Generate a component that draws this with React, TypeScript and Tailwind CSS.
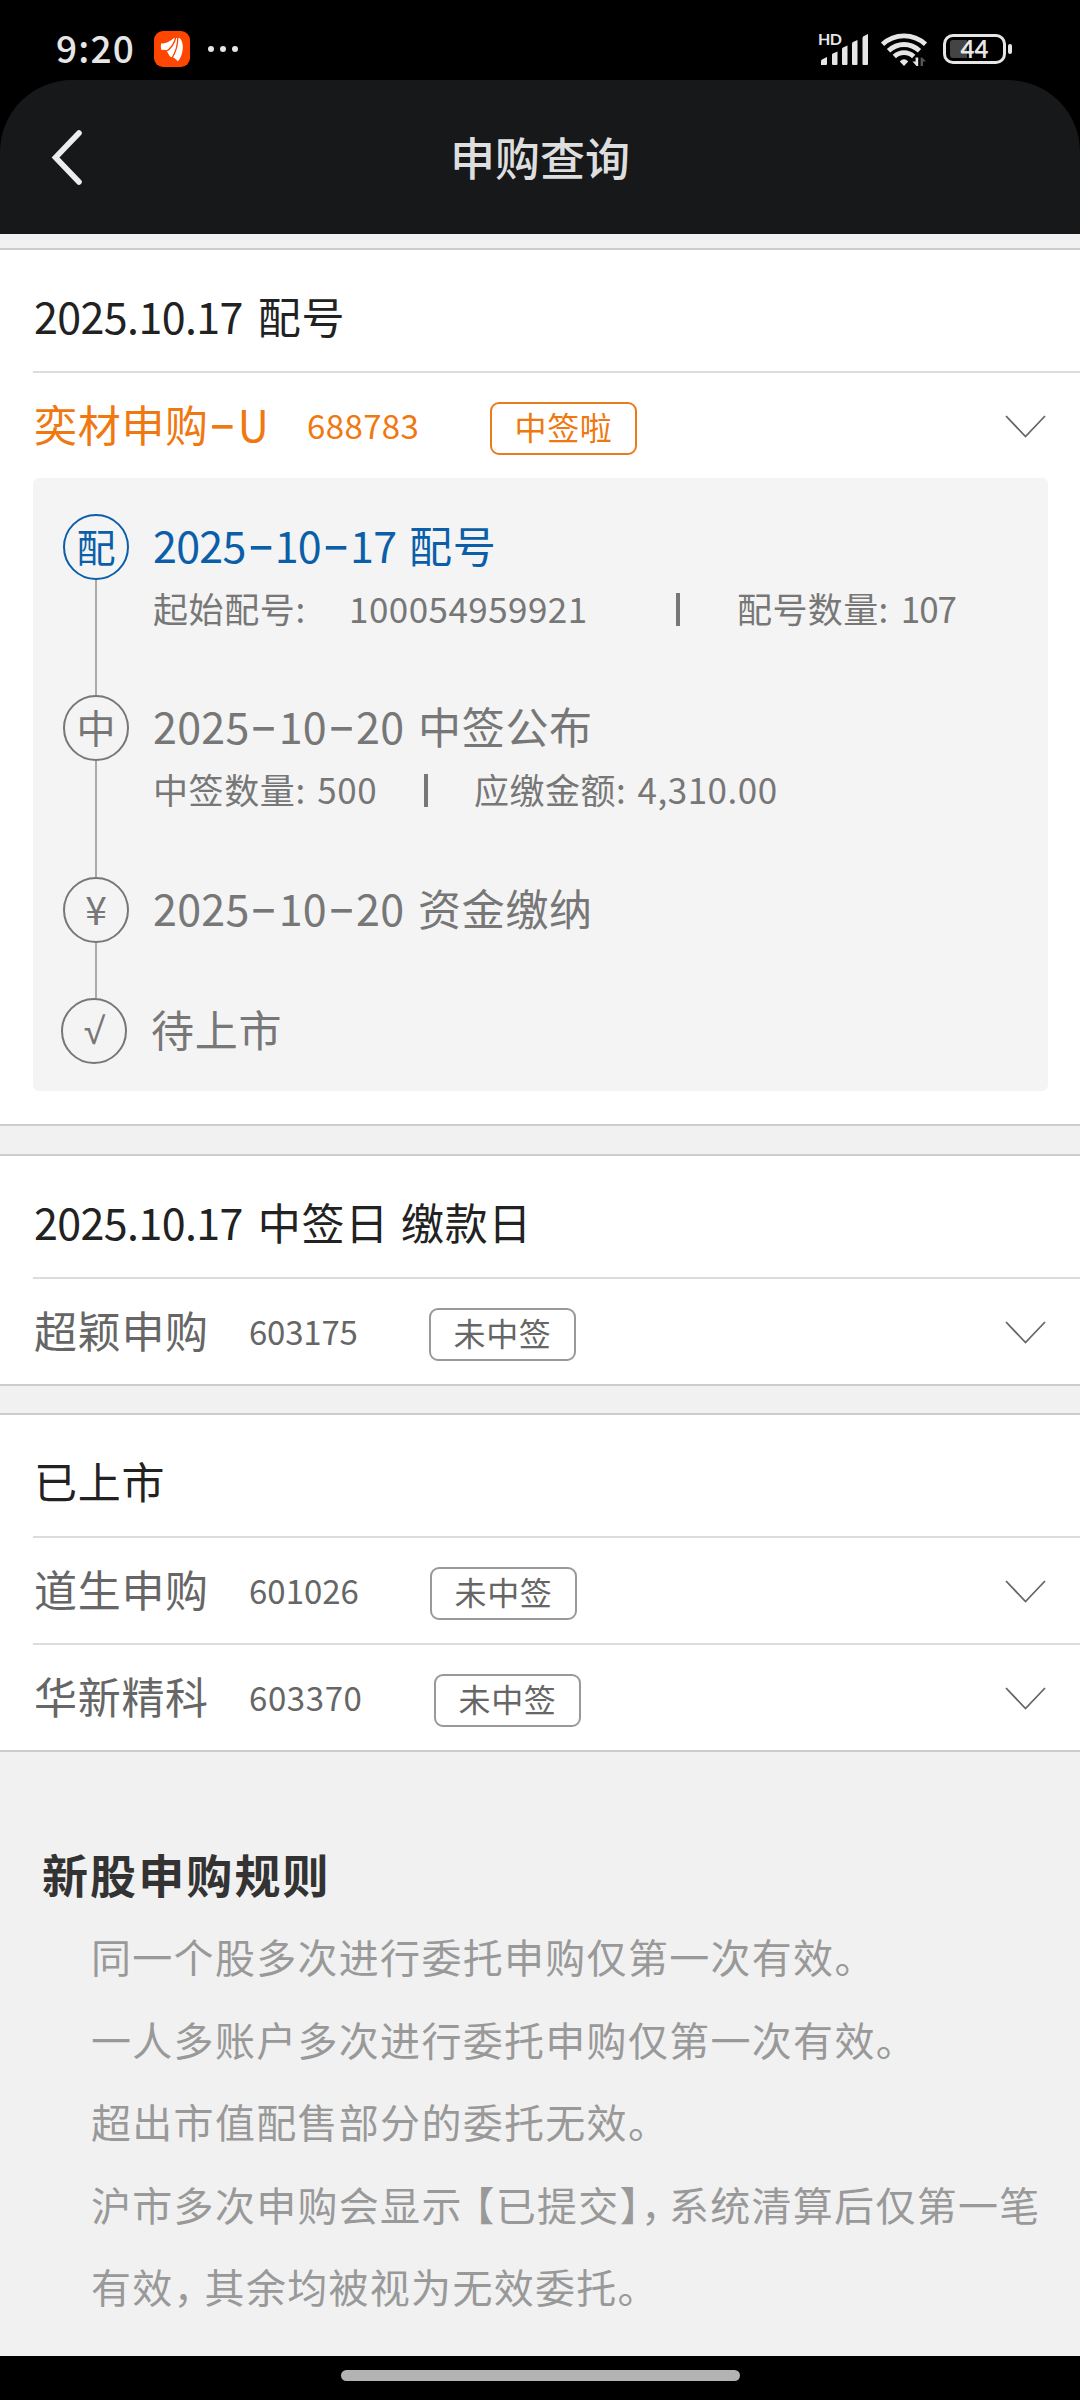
import type { ReactNode } from 'react'
import clsx from 'clsx'

interface StockItem {
  name: string
  code: string
  status: string
  won?: boolean
  nameClass: string
  codeClass: string
}

interface TimelineStep {
  icon: string
  date?: string
  label: string
  active?: boolean
  rowClass: string
  dateClass?: string
  iconClass: string
  details?: ReactNode
}

const StatusBar = () => (
  <div className="flex h-20 shrink-0 items-start bg-black text-[#e6e6e6]">
    <span className="ml-[56px] mt-[25px] text-[37px] font-medium leading-[44px] tracking-[1.2px]">
      9:20
    </span>
    <svg className="ml-[19px] mt-[31px] h-9 w-9" viewBox="0 0 36 36">
      <rect width="36" height="36" rx="9" fill="#ff4600" />
      <path
        d="M7 12.6C13 12.4 17 9.5 20 7L25.5 7C28 9 29 13 28.8 17C28.5 22 27 27 24 30.3L20.3 27L16 25.6L13.8 22L12 19L7.3 18.8Q6.6 15.5 7 12.6Z"
        fill="#fff"
      />
      <g fill="none" stroke="#ff4600" strokeLinecap="round">
        <path d="M21.8 6C20.5 12.5 16.5 18 11.5 20.8" strokeWidth="1.3" />
        <path d="M23.8 6C24 14 21.5 21.5 17.8 27.5" strokeWidth="1.3" />
        <path d="M12 20.6L13 23" strokeWidth="1.6" />
      </g>
    </svg>
    <div className="ml-[18px] mt-[46px] flex gap-[6px]">
      <i className="h-[6px] w-[6px] rounded-full bg-[#e6e6e6]" />
      <i className="h-[6px] w-[6px] rounded-full bg-[#e6e6e6]" />
      <i className="h-[6px] w-[6px] rounded-full bg-[#e6e6e6]" />
    </div>

    <div className="ml-auto mr-[68px] flex">
      <svg className="mt-[30px] h-10 w-[52px]" viewBox="0 0 52 40" fill="#e6e6e6">
        <text
          x="0"
          y="15"
          fontSize="16"
          fontWeight="700"
          fontFamily="Lato, sans-serif"
          textLength="24"
        >
          HD
        </text>
        <path d="M3 35V31Q3 30 4 29.5L9 27V34Q9 35 8 35H4Q3 35 3 35Z" />
        <path d="M14 34V24.5Q14 24 14.8 23.5L19.5 21.5V34Q19.5 35 18.5 35H15Q14 35 14 34Z" />
        <path d="M24 34V19Q24 18 25 17.5L29.5 15.5V34Q29.5 35 28.5 35H25Q24 35 24 34Z" />
        <path d="M34 34V13.5Q34 12.5 35 12L39.5 10V34Q39.5 35 38.5 35H35Q34 35 34 34Z" />
        <path d="M44.5 34V8Q44.5 7 45.5 6.3L50 4V34Q50 35 49 35H45.5Q44.5 35 44.5 34Z" />
      </svg>
      <svg className="ml-[10px] mt-8 h-9 w-[50px]" viewBox="0 0 50 36">
        <g fill="none" stroke="#e6e6e6" strokeWidth="4.8">
          <path d="M2.5 12.2C15 1 33 1 45.5 12.2" />
          <path d="M8.5 18.8C17.5 10.4 30.5 10.4 39.5 18.8" />
          <path d="M14.3 24.6C20 19.3 28 19.3 33.7 24.6" />
        </g>
        <path d="M24 34L19.8 29.5Q24 25 28.2 29.5Z" fill="#e6e6e6" />
        <path d="M38.2 25.5V34H36.5L32.5 29.6H35.6V25.5Z" fill="#e6e6e6" />
        <path d="M40.6 34V25.5H42L46 29.6H43V34Z" fill="#555" />
      </svg>
      <div className="ml-[13px] mt-[34px] flex items-center self-start">
        <div className="relative flex h-[30px] w-[63px] items-center justify-center rounded-[10px] border-[3px] border-[#e6e6e6]">
          <div className="absolute left-1 top-[3px] h-[18px] w-[17px] rounded-l-[3px] bg-[#444]" />
          <span className="relative font-[Lato] text-[24px] font-bold leading-6">44</span>
        </div>
        <div className="ml-[2px] h-[10px] w-1 rounded-full bg-[#e6e6e6]" />
      </div>
    </div>
  </div>
)

const Header = () => (
  <div className="shrink-0 bg-black">
    <div className="grid h-[154px] grid-cols-[140px_1fr_140px] items-center rounded-t-[72px] bg-[#17181a]">
      <svg className="ml-[50px] h-[58px] w-9" viewBox="0 0 36 58">
        <path
          d="M29 5L5.5 29.5L29 54"
          fill="none"
          stroke="#ededed"
          strokeWidth="5.6"
          strokeLinecap="round"
        />
      </svg>
      <h1 className="text-center text-[45px] font-medium leading-[60px] text-[#dedede]">
        申购查询
      </h1>
    </div>
  </div>
)

// Splits on the hyphen so that it can be drawn wider than the font has it
const DashText = ({ value, className }: { value: string; className?: string }) => (
  <span className={className}>
    {value.split('-').map((part, i) => (
      <span key={i}>
        {i > 0 && (
          <span className="relative -top-[3px] inline-block w-[29px] text-center">
            <span className="inline-block scale-x-[1.8] font-medium">-</span>
          </span>
        )}
        {part}
      </span>
    ))}
  </span>
)

const SectionHeading = ({ date, labels }: { date?: string; labels: string[] }) => (
  <div className="flex h-[121px] pl-[34px] pt-[35px] text-[43px] leading-[60px] text-[#222]">
    {date && <span className="mr-[15px] tracking-[-0.6px]">{date}</span>}
    {labels.map((label) => (
      <span key={label} className="mr-3 tracking-[0.7px]">
        {label}
      </span>
    ))}
  </div>
)

const StockRow = ({ name, code, status, won, nameClass, codeClass }: StockItem) => (
  <div
    className={clsx(
      'flex h-[105px] items-center pl-[34px] pr-[34px]',
      won ? 'text-[#f07810]' : 'text-[#666]'
    )}
  >
    <DashText
      value={name}
      className={clsx(
        'whitespace-nowrap pb-[6px] text-[43px] leading-[60px] tracking-[0.7px]',
        nameClass
      )}
    />
    <span className={clsx('pb-[1px] text-[33px] leading-[44px]', codeClass)}>{code}</span>
    <span
      className={clsx(
        'mt-[5px] flex h-[53px] w-[147px] items-center justify-center rounded-[9px] border-2 pb-1 text-[32px] tracking-[0.6px]',
        won ? 'border-[#e87c1c]' : 'border-[#999]'
      )}
    >
      {status}
    </span>
    <svg className="ml-auto mt-[3px] h-6 w-[42px]" viewBox="0 0 42 24">
      <path d="M2 1L21.5 21.5L41 1" fill="none" stroke="#666" strokeWidth="1.8" />
    </svg>
  </div>
)

const Divider = () => <div className="ml-[33px] h-[2px] bg-[#dcdcdc]" />

const Section = ({ className, children }: { className?: string; children: ReactNode }) => (
  <section className={clsx('border-y-2 border-[#ccc] bg-white', className)}>{children}</section>
)

const DetailSeparator = () => <span className="mt-[9px] h-[33px] w-[4px] bg-[#777]" />

const steps: TimelineStep[] = [
  {
    icon: '配',
    date: '2025-10-17',
    label: '配号',
    active: true,
    rowClass: 'h-[181px]',
    dateClass: 'w-[256px] tracking-[-0.7px]',
    iconClass: 'pb-[4px] text-[39px]',
    details: (
      <>
        <span className="w-[196px] tracking-[0.6px]">起始配号:</span>
        <span className="w-[327px] tracking-[0.45px]">100054959921</span>
        <DetailSeparator />
        <span className="ml-[57px] tracking-[0.4px]">
          配号数量:<span className="ml-[12px] tracking-[-1px]">107</span>
        </span>
      </>
    ),
  },
  {
    icon: '中',
    date: '2025-10-20',
    label: '中签公布',
    rowClass: 'h-[182px]',
    dateClass: 'w-[265px] tracking-[0.3px]',
    iconClass: 'pb-[4px] text-[39px]',
    details: (
      <>
        <span className="w-[271px] tracking-[0.6px] [word-spacing:3px]">中签数量: 500</span>
        <DetailSeparator />
        <span className="ml-[46px] tracking-[0.5px] [word-spacing:3px]">
          应缴金额: 4,310.00
        </span>
      </>
    ),
  },
  {
    icon: '¥',
    date: '2025-10-20',
    label: '资金缴纳',
    rowClass: 'h-[121px]',
    dateClass: 'w-[265px] tracking-[0.3px]',
    iconClass: 'pb-[5px] text-[39px]',
  },
  {
    icon: '√',
    label: '待上市',
    rowClass: 'h-[66px] -ml-[2px]',
    iconClass: "font-['Open_Sans'] text-[36px] font-medium",
  },
]

const Timeline = () => (
  <div className="mx-[33px] mb-[33px] w-[1015px] rounded-md bg-[#f4f4f4] pb-[27px] pl-[30px] pt-9">
    {steps.map((step, i) => (
      <div key={i} className={clsx('flex', step.rowClass)}>
        <div className="flex w-[66px] shrink-0 flex-col items-center">
          <span
            className={clsx(
              'flex h-[66px] w-[66px] shrink-0 items-center justify-center rounded-full border-2 leading-[60px]',
              step.active ? 'border-[#0b5fa8] text-[#0b5fa8]' : 'border-[#777] text-[#777]',
              step.iconClass
            )}
          >
            {step.icon}
          </span>
          {i < steps.length - 1 && <span className="w-[2px] grow bg-[#aaa]" />}
        </div>
        <div className="ml-6">
          <div
            className={clsx(
              '-mt-[3px] flex pb-[3px] text-[43px] leading-[66px]',
              step.active ? 'text-[#0b5fa8]' : 'text-[#777]'
            )}
          >
            {step.date && <DashText value={step.date} className={step.dateClass} />}
            <span className="tracking-[0.7px]">{step.label}</span>
          </div>
          {step.details && (
            <div className="mt-1 flex whitespace-nowrap text-[35px] leading-[48px] text-[#777]">
              {step.details}
            </div>
          )}
        </div>
      </div>
    ))}
  </div>
)

const Rules = () => (
  <div className="pl-[42px] pt-[88px]">
    <h2 className="text-[46px] font-bold leading-[66px] tracking-[2.1px] text-[#333]">
      新股申购规则
    </h2>
    <div className="mt-[9px] pl-[49px] text-[40px] leading-[82.5px] tracking-[1.3px] text-[#999]">
      <p>同一个股多次进行委托申购仅第一次有效。</p>
      <p>一人多账户多次进行委托申购仅第一次有效。</p>
      <p>超出市值配售部分的委托无效。</p>
      <p className="whitespace-nowrap">
        沪市多次申购会显<span className="tracking-[-7px]">示</span>【已提交】
        <span className="tracking-[-12px]">，</span>系统清算后仅第一笔
        <br />
        有效<span className="tracking-[-9px]">，</span>其余均被视为无效委托。
      </p>
    </div>
  </div>
)

const App = () => (
  <div className="flex h-[2400px] w-[1080px] flex-col overflow-hidden bg-[#f1f1f1] font-['Noto_Sans_CJK_SC',sans-serif]">
    <StatusBar />
    <Header />
    <main className="grow">
      <Section className="mt-[14px]">
        <SectionHeading date="2025.10.17" labels={['配号']} />
        <Divider />
        <StockRow
          name="奕材申购-U"
          code="688783"
          status="中签啦"
          won
          nameClass="w-[273px]"
          codeClass="w-[183px] tracking-[0.4px]"
        />
        <Timeline />
      </Section>
      <Section className="mt-7">
        <SectionHeading date="2025.10.17" labels={['中签日', '缴款日']} />
        <Divider />
        <StockRow
          name="超颖申购"
          code="603175"
          status="未中签"
          nameClass="w-[215px]"
          codeClass="w-[180px] tracking-[-0.2px]"
        />
      </Section>
      <Section className="mt-[27px]">
        <SectionHeading labels={['已上市']} />
        <Divider />
        <StockRow
          name="道生申购"
          code="601026"
          status="未中签"
          nameClass="w-[215px]"
          codeClass="w-[181px]"
        />
        <Divider />
        <StockRow
          name="华新精科"
          code="603370"
          status="未中签"
          nameClass="w-[215px]"
          codeClass="w-[185px] tracking-[0.6px]"
        />
      </Section>
      <Rules />
    </main>
    <footer className="h-11 shrink-0 bg-black pt-[14px]">
      <div className="mx-auto h-[11px] w-[399px] rounded-full bg-[#b3b3b3]" />
    </footer>
  </div>
)

export default App
